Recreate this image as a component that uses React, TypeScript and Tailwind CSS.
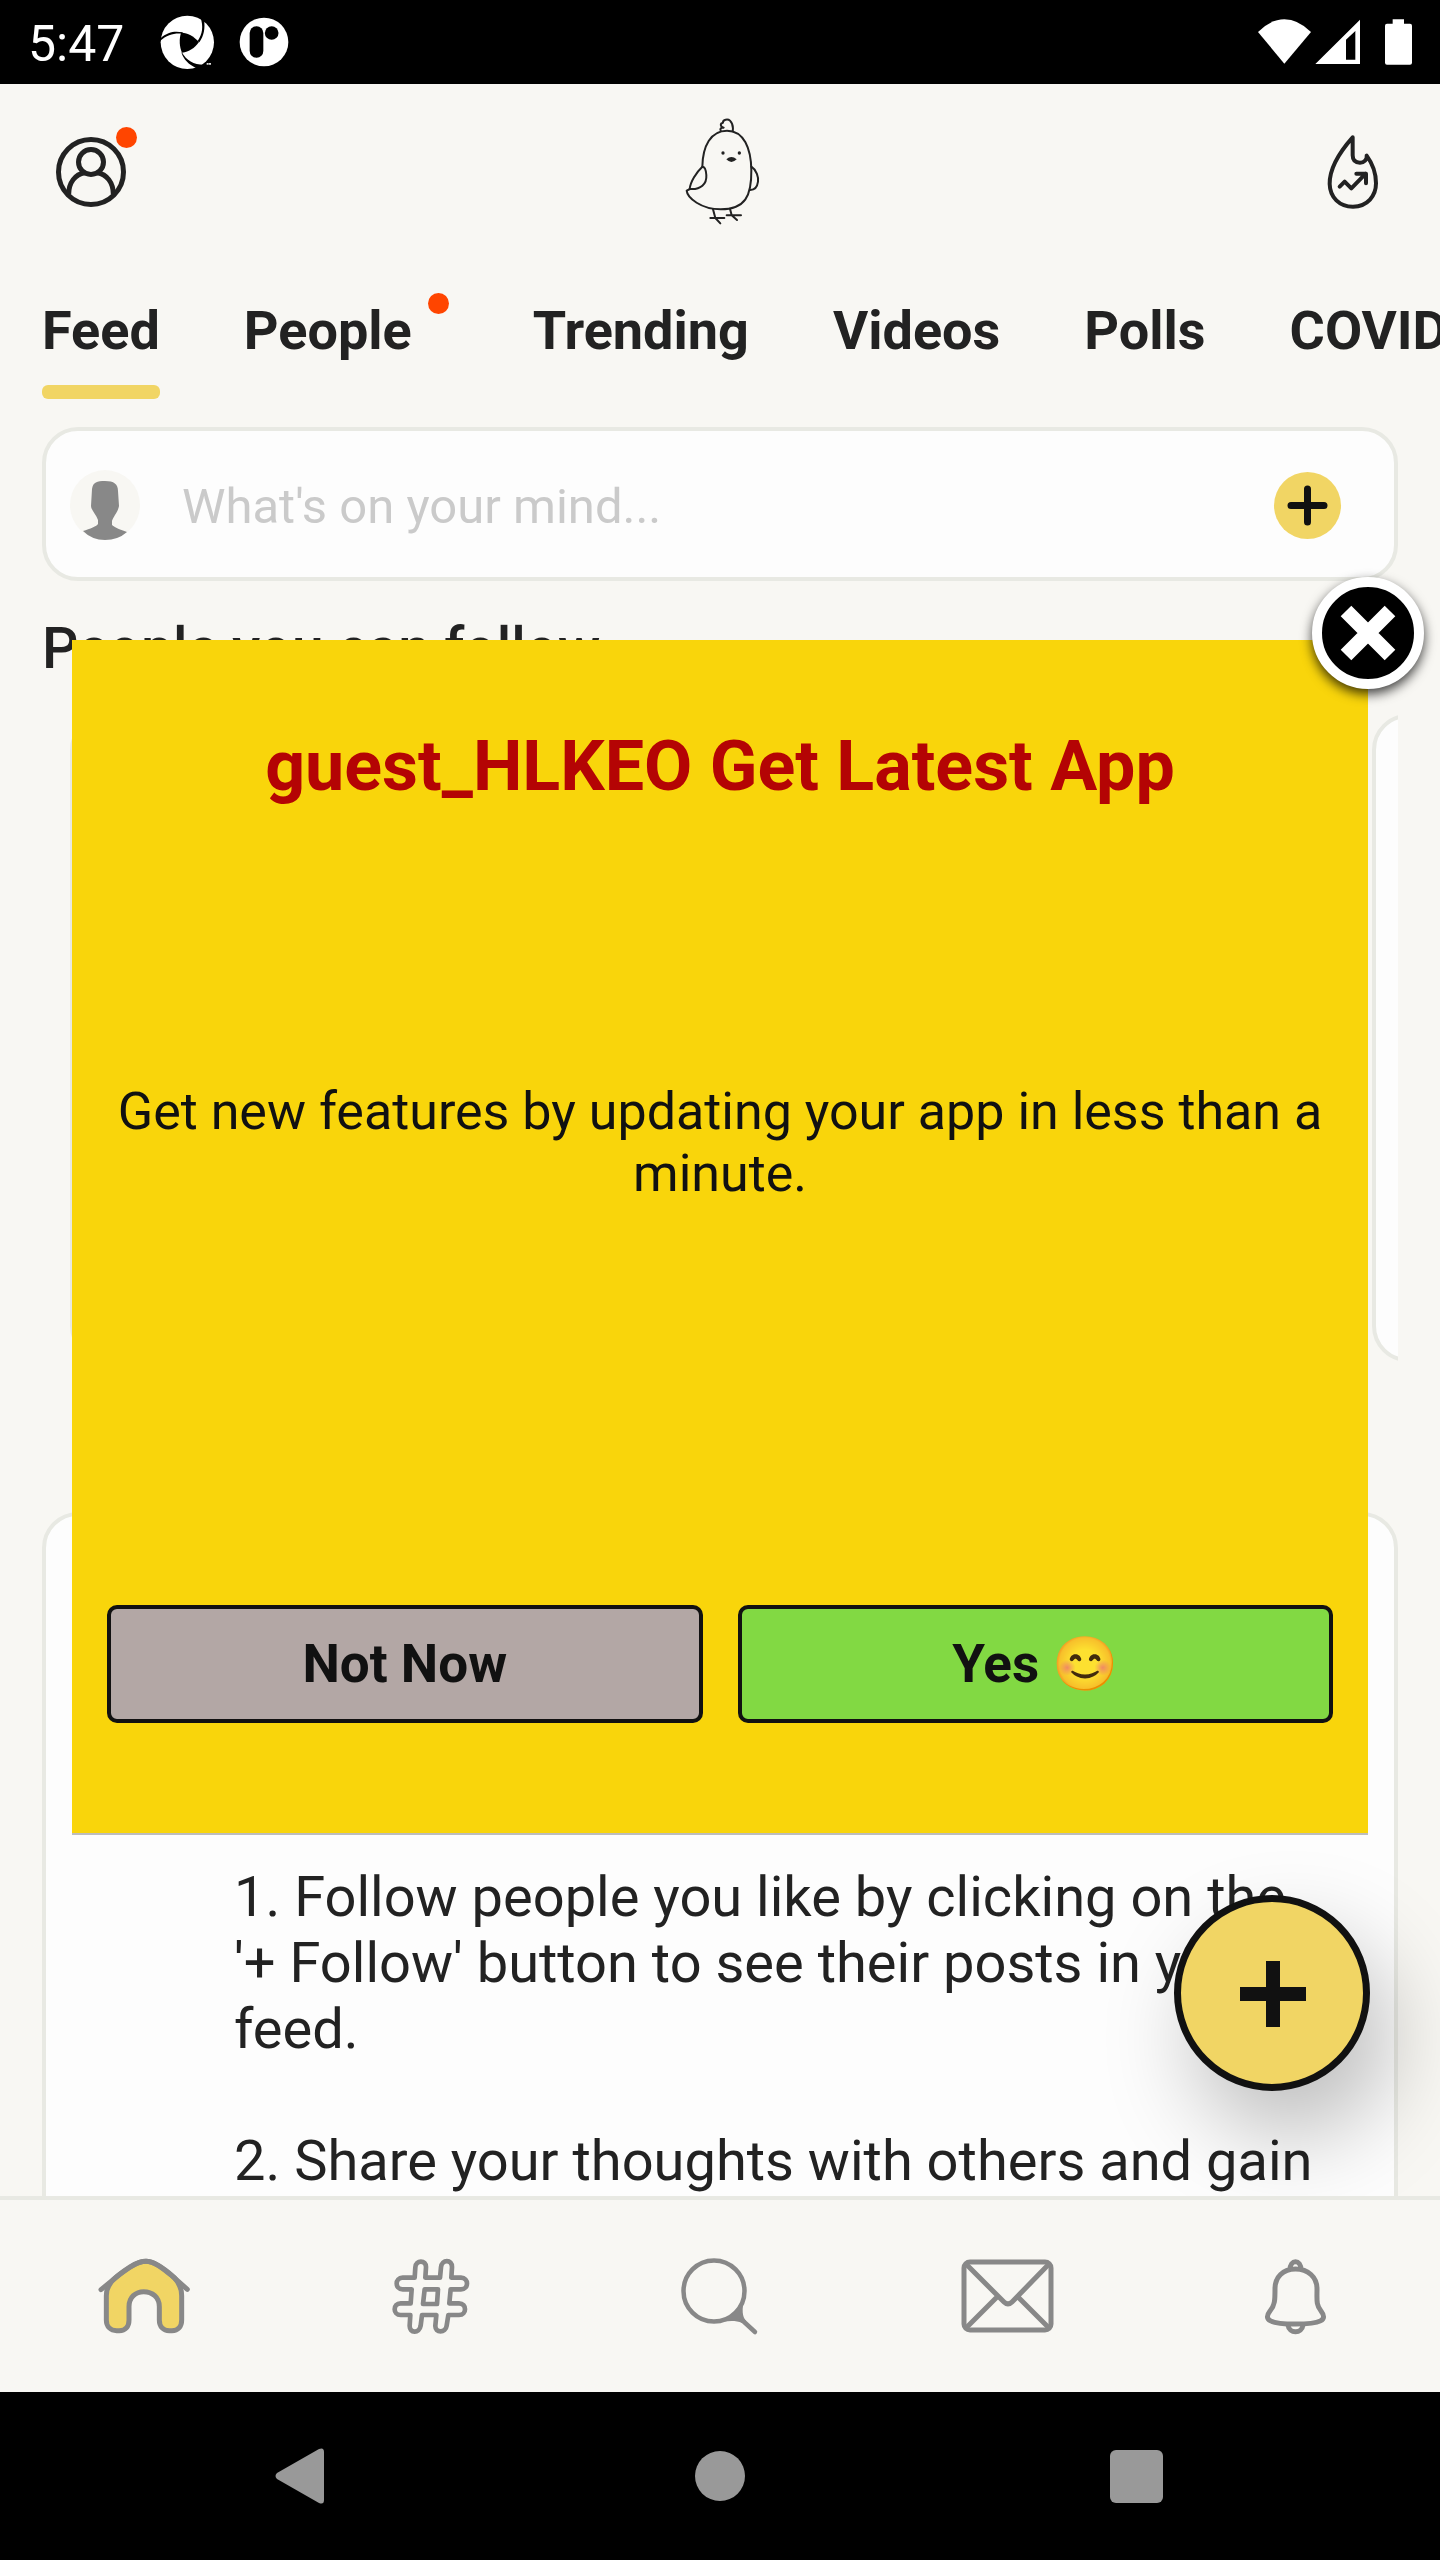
import type { ReactNode } from "react";

const steps = [
  "1. Follow people you like by clicking on the '+ Follow' button to see their posts in your feed.",
  "2. Share your thoughts with others and gain",
];

function StatusBar() {
  return (
    <div className="flex h-[84px] shrink-0 items-center justify-between bg-black pl-7 pr-7 text-white">
      <div className="flex items-center">
        <span className="pt-1 text-[50px] leading-[58px]">5:47</span>
        <svg className="ml-[36px] h-[55px] w-[55px]" viewBox="480 45 165 165" aria-hidden="true">
          <circle cx="562" cy="127" r="80" fill="#fff" />
          <path d="M543 98 C562 97 580 108 597 126 C583 145 568 155 546 158 C538 140 537 118 543 98Z" fill="#000" />
          <path d="M480 116 C505 94 525 93 548 97 L548 101 C525 98 502 103 480 123Z" fill="#000" />
          <path d="M602 54 C610 78 608 102 593 123 L598 127 C612 108 616 84 612 58Z" fill="#000" />
          <path d="M545 156 C560 182 580 194 612 194 L600 210 L588 204 C566 194 551 178 545 160Z" fill="#000" />
          <path d="M620 189h6v5h-6zM627 189h6v5h-6z" fill="#ddd" />
        </svg>
        <svg className="ml-[24px] h-[50px] w-[50px]" viewBox="718 52 150 150" aria-hidden="true">
          <circle cx="793" cy="127" r="73" fill="#fff" />
          <rect x="750" y="80" width="41" height="94" rx="20" fill="#000" />
          <circle cx="816" cy="100" r="20.500" fill="#000" />
        </svg>
      </div>
      <div className="flex items-center">
        <svg className="h-[46px] w-[53px]" viewBox="174 56 159 138" aria-hidden="true">
          <path d="M174 95 Q213 57 253 57 Q294 57 333 95 L253 190Z" fill="#fff" />
        </svg>
        <svg className="ml-1 h-[46px] w-[46px]" viewBox="345 56 138 138" aria-hidden="true">
          <path d="M346 191 L480 58 V191Z M438 178 H466 V92 L438 118Z" fill="#fff" fillRule="evenodd" />
        </svg>
        <svg className="ml-6 h-[46px] w-[27px]" viewBox="555 57 81 138" aria-hidden="true">
          <path d="M578 58h34v13h18q6 0 6 6v111q0 6-6 6h-69q-6 0-6-6V77q0-6 6-6h17z" fill="#fff" />
        </svg>
      </div>
    </div>
  );
}

function Header() {
  return (
    <header className="flex h-[176px] shrink-0 items-center justify-between pl-[56px] pr-[52px]">
      <button aria-label="Profile" className="relative h-[70px] w-[70px]">
        <svg className="h-full w-full" viewBox="168 411 210 210" fill="none" stroke="#222" strokeWidth="15">
          <circle cx="273" cy="516" r="97.500" />
          <circle cx="273" cy="486" r="37.500" />
          <path d="M206 583 C206 548 226 522 254 518 M292 518 C320 522 340 548 340 583" />
        </svg>
        <span className="absolute -right-[11px] -top-[10px] h-[21px] w-[21px] rounded-full bg-[#ff4500]" />
      </button>
      <svg
        className="h-[108px] w-[76px]"
        viewBox="130 84 228 324"
        fill="none"
        stroke="#222"
        strokeWidth="6"
        strokeLinecap="round"
        strokeLinejoin="round"
        role="img"
        aria-label="Chick logo"
      >
        <path d="M185 230 C186 168 210 122 259 122 C310 122 331 176 332 240 C333 318 314 358 240 358 C182 358 140 324 138 302 L148 297" />
        <path d="M185 230 C166 248 149 276 147 297 C180 300 199 282 197 255 C196 240 191 230 185 230Z" />
        <path d="M332 230 C348 240 354 262 352 275 C350 290 342 300 329 300" />
        <path d="M240 121 C237 115 244 112 249 113 C238 110 238 100 247 98 C246 88 262 86 268 92 C276 100 278 112 276 124" />
        <circle cx="247" cy="189" r="5" fill="#222" stroke="none" />
        <circle cx="296" cy="189" r="5" fill="#222" stroke="none" />
        <path d="M257 208 Q272 194 288 208 Q272 224 257 208Z" fill="#222" stroke="none" />
        <path d="M217 358 L224 384 L239 400 M209 384 H251 M268 356 L273 376 L289 390 M258 376 H301" />
      </svg>
      <button aria-label="Trending now" className="flex w-[70px] justify-center">
        <svg
          className="h-[76px] w-[54px]"
          viewBox="380 400 162 228"
          fill="none"
          stroke="#222"
          strokeWidth="12"
          strokeLinecap="round"
          strokeLinejoin="round"
        >
          <path d="M460 410 C428 446 390 496 391 550 C392 590 420 618 461 618 C505 618 530 585 530 548 C530 515 518 487 502 465 C504 476 494 486 482 486 C468 486 460 478 460 464Z" />
          <path d="M421 558 L436 543 L456 563 L499 519 M471 519 H500 V548" />
        </svg>
      </button>
    </header>
  );
}

function Tab({ label, active, dot }: { label: string; active?: boolean; dot?: boolean }) {
  return (
    <button className="flex shrink-0 flex-col gap-[23px] text-left" aria-current={active ? "page" : undefined}>
      <span className="flex">
        <span>{label}</span>
        {dot && <span className="-mt-[7px] ml-4 h-[21px] w-[21px] rounded-full bg-[#ff4500]" />}
      </span>
      {active && <span className="h-[14px] w-full rounded-md bg-[#f1d564]" />}
    </button>
  );
}

function Tabs() {
  return (
    <nav className="flex h-[140px] shrink-0 items-start gap-[84px] overflow-hidden pl-[42px] pt-[40px] text-[54px] font-bold leading-[62px] whitespace-nowrap">
      <Tab label="Feed" active />
      <Tab label="People" dot />
      <Tab label="Trending" />
      <Tab label="Videos" />
      <Tab label="Polls" />
      <Tab label="COVID" />
    </nav>
  );
}

function Composer() {
  return (
    <div className="mt-[27px] flex h-[154px] items-center rounded-[36px] border-4 border-[#e8e9e3] bg-[#fdfdfd] pl-6 pr-[53px] pt-0.5">
      <svg className="h-[70px] w-[70px] shrink-0" viewBox="0 0 70 70" aria-hidden="true">
        <circle cx="35" cy="35" r="35" fill="#f8f7f3" />
        <path
          d="M22 19 C23 12 27 11 35 11 C44 11 48 14 48 21 L49 36 C48 42 43 47 42 51 V55 C45 58 52 60 57 62 Q48 70 35 70 Q22 70 13 61 C20 59 27 56 28 54 V50 C26 44 21 40 21 36Z"
          fill="#888"
        />
      </svg>
      <input
        aria-label="Write a post"
        placeholder="What's on your mind..."
        className="ml-[42px] min-w-0 flex-1 bg-transparent pt-1 text-[49px] leading-[58px] outline-none placeholder:text-[#cacaca]"
      />
      <button aria-label="Add post" className="h-[67px] w-[67px] shrink-0 rounded-full bg-[#f1d564]">
        <svg viewBox="0 0 67 67" stroke="#111" strokeWidth="7" strokeLinecap="round">
          <path d="M17 33.500H50M33.500 17V50" />
        </svg>
      </button>
    </div>
  );
}

function Feed() {
  return (
    <main className="min-h-0 flex-1 overflow-hidden px-[42px]">
      <Composer />
      <h2 className="mt-[34px] text-[57px] font-medium leading-[68px]">People you can follow</h2>
      <div className="mt-[31px] flex gap-7 overflow-hidden pl-7">
        <div className="h-[648px] w-[calc(100%-54px)] shrink-0 rounded-[36px] border-4 border-[#e8e9e3] bg-[#fdfdfd]" />
        <div className="h-[648px] w-[calc(100%-54px)] shrink-0 rounded-[36px] border-4 border-[#e8e9e3] bg-[#fdfdfd]" />
      </div>
      <article className="mt-[150px] rounded-[36px] border-4 border-[#e8e9e3] bg-[#fdfdfd] pb-20 pl-[188px] pr-[60px] pt-[348px] text-[56px] leading-[66px]">
        <ol className="flex flex-col gap-[66px]">
          {steps.map((step) => (
            <li key={step}>{step}</li>
          ))}
        </ol>
      </article>
    </main>
  );
}

function UpdateDialog() {
  return (
    <div className="absolute inset-0 flex items-center px-[72px] pb-1">
      <div
        role="dialog"
        aria-labelledby="update-title"
        className="relative flex w-full flex-col bg-[#f9d50b] px-[35px] pb-[110px] pt-[85px] text-center text-[#111] shadow-[0_2px_0_#bdbdbd]"
      >
        <h1 id="update-title" className="text-[70px] font-bold leading-[82px] text-[#b40404]">
          guest_HLKEO Get Latest App
        </h1>
        <p className="mt-[274px] text-[52px] leading-[62px]">
          Get new features by updating your app in less than a minute.
        </p>
        <div className="mt-[400px] grid grid-cols-2 gap-[35px] text-[53px] font-bold leading-[62px]">
          <button className="rounded-[10px] border-4 border-[#111] bg-[#b3a7a5] py-6">Not Now</button>
          <button className="rounded-[10px] border-4 border-[#111] bg-[#82d943] py-6">Yes 😊</button>
        </div>
        <button
          aria-label="Close"
          className="absolute -right-[56px] -top-[63px] h-[112px] w-[112px] rounded-full border-[10px] border-white bg-black shadow-[0_5px_12px_rgba(0,0,0,0.75)]"
        >
          <svg viewBox="0 0 92 92" stroke="#fff" strokeWidth="15">
            <path d="M24 24 L68 68 M68 24 L24 68" />
          </svg>
        </button>
      </div>
    </div>
  );
}

function NavButton({ label, children }: { label: string; children: ReactNode }) {
  return (
    <button aria-label={label} className="flex items-center justify-center">
      {children}
    </button>
  );
}

function BottomNav() {
  return (
    <nav className="relative grid h-[196px] shrink-0 grid-cols-5 border-t-4 border-[#e8e9e3] bg-[#f8f7f3]">
      <NavButton label="Home">
        <svg className="h-20 w-24" viewBox="106 228 288 240" fill="none" stroke="#888" strokeWidth="15" strokeLinecap="round" strokeLinejoin="round">
          <path
            d="M137 347 V420 C137 440 150 452 168 452 H176 C194 452 205 440 205 420 V380 C205 352 225 335 249 335 C275 335 296 352 296 380 V420 C296 440 308 452 326 452 H334 C352 452 363 440 363 420 V347 C363 325 356 309 340 292 C310 265 280 244 256 244 C225 244 190 272 165 292 C147 307 137 325 137 347Z"
            fill="#f1d564"
          />
          <path d="M121 329 L175 285 C205 263 232 244 256 244 C280 244 305 265 330 284 L380 328" />
        </svg>
      </NavButton>
      <NavButton label="Topics">
        <svg className="h-20 w-20" viewBox="996 228 240 240" fill="none" stroke="#888" strokeWidth="14" strokeLinejoin="round">
          <path d="M1064 293 L1066 262 C1067 239 1099 239 1098 262 L1096 293 H1140 L1143 262 C1145 237 1177 237 1176 262 L1174 293 H1203 C1227 293 1227 328 1203 328 H1172 L1168 370 H1197 C1221 370 1221 405 1197 405 H1165 L1160 437 C1157 460 1125 460 1126 437 L1129 405 H1086 L1082 437 C1078 462 1048 460 1049 437 L1051 405 H1022 C998 405 998 370 1022 370 H1052 L1055 328 H1028 C1004 328 1004 293 1028 293Z" />
          <path d="M1094 328 H1134 L1131 372 H1089Z" />
        </svg>
      </NavButton>
      <NavButton label="Search">
        <svg className="h-20 w-20" viewBox="680 2256 80 80" fill="none" stroke="#888" strokeWidth="4.500" strokeLinecap="round">
          <circle cx="714" cy="2291" r="30.500" />
          <path d="M744 2298 C742 2310 742 2316 746 2321 L742 2323 C735 2320 727 2321 714 2323 C728 2320 740 2310 744 2298Z" fill="#888" stroke="none" />
          <path d="M742 2320 L755 2332" />
        </svg>
      </NavButton>
      <NavButton label="Messages">
        <svg className="h-20 w-24" viewBox="960 2256 96 80" fill="none" stroke="#888" strokeWidth="5" strokeLinejoin="round">
          <rect x="964" y="2262" width="87" height="68" rx="6" />
          <path d="M966 2264 L1004 2302 Q1008 2306 1012 2302 L1049 2264 M966 2328 L997 2297 M1049 2328 L1018 2297" />
        </svg>
      </NavButton>
      <NavButton label="Notifications">
        <svg className="h-20 w-16" viewBox="1264 2256 64 80" fill="none" stroke="#888" strokeWidth="5">
          <path d="M1295.500 2269 C1283 2269 1275 2277 1275 2289 C1275 2300 1275 2305 1270 2311 C1263 2320 1270 2324 1295.500 2324 C1321 2324 1328 2320 1321 2311 C1316 2305 1317 2300 1317 2289 C1317 2277 1308 2269 1295.500 2269Z" />
          <path d="M1290 2270 C1290 2259 1301 2259 1301 2270 M1288 2325 C1289 2334 1302 2334 1303 2325" />
        </svg>
      </NavButton>
    </nav>
  );
}

function SystemNav() {
  return (
    <div className="grid h-[168px] shrink-0 grid-cols-3 bg-black px-24">
      <NavButton label="Back">
        <svg className="mr-2 h-14 w-[50px]" viewBox="0 0 50 56" fill="#999">
          <path d="M2 25 L44 1 Q49 -1 49 4 V52 Q49 57 44 55 L2 31 Q-1 28 2 25Z" />
        </svg>
      </NavButton>
      <NavButton label="Home screen">
        <span className="h-[50px] w-[50px] rounded-full bg-[#999]" />
      </NavButton>
      <NavButton label="Recent apps">
        <span className="h-[53px] w-[53px] rounded-md bg-[#999]" />
      </NavButton>
    </div>
  );
}

export default function App() {
  return (
    <div className="flex h-screen flex-col overflow-hidden bg-[#f8f7f3] font-[Roboto,sans-serif] text-[#222]">
      <StatusBar />
      <div className="relative flex min-h-0 flex-1 flex-col">
        <Header />
        <Tabs />
        <div className="relative flex min-h-0 flex-1 flex-col overflow-hidden">
          <Feed />
          <button
            aria-label="New post"
            className="absolute bottom-[105px] right-[70px] h-[196px] w-[196px] rounded-full border-[7px] border-[#111] bg-[#f1d564] shadow-[20px_44px_90px_rgba(0,0,0,0.25)]"
          >
            <svg viewBox="0 0 182 182" stroke="#111" strokeWidth="14">
              <path d="M59 92H125M92 59V125" />
            </svg>
          </button>
        </div>
        <BottomNav />
        <UpdateDialog />
      </div>
      <SystemNav />
    </div>
  );
}
